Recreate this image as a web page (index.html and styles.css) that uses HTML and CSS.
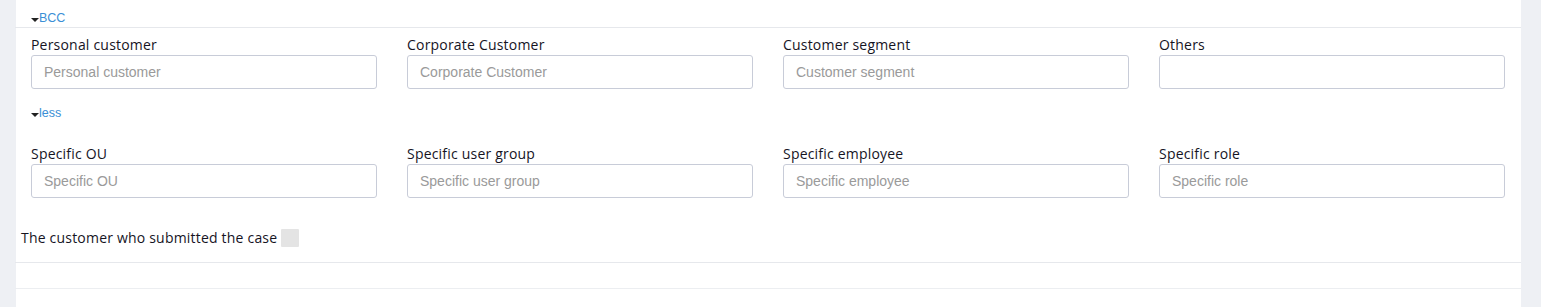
FILE: index.html
```html
<!DOCTYPE html>
<html lang="en">
<head>
    <meta charset="UTF-8">
    <title>Recipients</title>
    <link rel="stylesheet" href="styles.css">
</head>
<body>
    <div class="card">
        <div class="toggle-row">
            <a class="toggle" href="#"><span class="caret"></span>BCC</a>
        </div>

        <div class="panel">
            <div class="field-grid">
                <div class="field">
                    <label>Personal customer</label>
                    <input type="text" placeholder="Personal customer">
                </div>
                <div class="field">
                    <label>Corporate Customer</label>
                    <input type="text" placeholder="Corporate Customer">
                </div>
                <div class="field">
                    <label>Customer segment</label>
                    <input type="text" placeholder="Customer segment">
                </div>
                <div class="field">
                    <label>Others</label>
                    <input type="text">
                </div>
            </div>

            <div class="less-row">
                <a class="toggle" href="#"><span class="caret"></span>less</a>
            </div>

            <div class="field-grid">
                <div class="field">
                    <label>Specific OU</label>
                    <input type="text" placeholder="Specific OU">
                </div>
                <div class="field">
                    <label>Specific user group</label>
                    <input type="text" placeholder="Specific user group">
                </div>
                <div class="field">
                    <label>Specific employee</label>
                    <input type="text" placeholder="Specific employee">
                </div>
                <div class="field">
                    <label>Specific role</label>
                    <input type="text" placeholder="Specific role">
                </div>
            </div>

            <div class="check-row">
                <span>The customer who submitted the case</span>
                <span class="check-box"></span>
            </div>
        </div>

        <div class="spacer"></div>
    </div>
</body>
</html>
```

FILE: styles.css
```css
body {
    margin: 0;
    background: #eef0f4;
    font-family: "Open Sans", Arial, sans-serif;
    color: #16141f;
}

.card {
    margin-left: 16px;
    width: 1505px;
    height: 307px;
    background: white;
}

.toggle-row {
    height: 27px;
    padding-left: 15px;
    box-sizing: border-box;
    padding-top: 5px;
}

.toggle {
    display: inline-flex;
    align-items: center;
    color: #3b8fd6;
    text-decoration: none;
    font-family: "Liberation Sans", Arial, sans-serif;
    font-size: 12.5px;
    line-height: 16px;
}

.caret {
    width: 0;
    height: 0;
    border-left: 4px solid transparent;
    border-right: 4px solid transparent;
    border-top: 4px solid #222;
    margin-top: 4px;
}

.panel {
    border-top: 1px solid #e6e8ec;
    border-bottom: 1px solid #e6e8ec;
    margin-left: -1px;
    padding: 8px 16px 16px 16px;
    box-sizing: border-box;
    height: 236px;
}

.field-grid {
    display: grid;
    grid-template-columns: repeat(4, 346px);
    column-gap: 30px;
}

.field label {
    display: block;
    font-size: 14px;
    letter-spacing: 0.2px;
    line-height: 18px;
    margin-bottom: 1px;
}

.field input {
    display: block;
    width: 100%;
    height: 34px;
    box-sizing: border-box;
    border: 1px solid #c8ccd8;
    border-radius: 3px;
    padding: 0 12px;
    font-family: "Liberation Sans", Arial, sans-serif;
    font-size: 14px;
    color: #333;
}

.field input::placeholder {
    color: #9a9a9a;
}

.less-row {
    height: 56px;
    padding-top: 11px;
    box-sizing: border-box;
}

.check-row {
    display: flex;
    align-items: center;
    gap: 4px;
    margin-left: -10px;
    margin-top: 30px;
    font-size: 14px;
    letter-spacing: 0.2px;
}

.check-box {
    width: 18px;
    height: 18px;
    background: #e4e4e4;
    border-radius: 1px;
}

.spacer {
    height: 25px;
    border-bottom: 1px solid #eceef1;
    margin-left: -1px;
}
```
